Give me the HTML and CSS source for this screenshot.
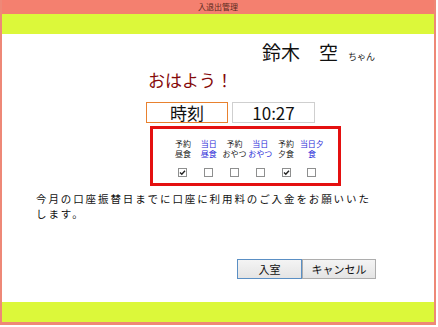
FILE: index.html
```html
<!DOCTYPE html>
<html lang="ja">
  <head>
    <meta charset="UTF-8" />
    <meta name="viewport" content="width=device-width, initial-scale=1.0" />
    <title>入退出管理</title>
    <link rel="stylesheet" href="styles.css">
  </head>
  <body>
    <div class="window">
      <div class="title-bar">入退出管理</div>
      <div class="band"></div>
      <div class="content">
        <div class="name-row">
          <span class="name">鈴木　空</span>
          <span class="suffix">ちゃん</span>
        </div>
        <div class="greeting">おはよう！</div>
        <div class="time-row">
          <div class="time-label">時刻</div>
          <div class="time-value">10:27</div>
        </div>
        <div class="meal-box">
          <div class="meal-grid">
            <div class="meal-label">予約<br>昼食</div>
            <div class="meal-label today">当日<br>昼食</div>
            <div class="meal-label">予約<br>おやつ</div>
            <div class="meal-label today">当日<br>おやつ</div>
            <div class="meal-label">予約<br>夕食</div>
            <div class="meal-label today">当日夕<br>食</div>

            <div class="cell"><span class="cb checked"><svg viewBox="0 0 9 9" width="9" height="9"><path d="M2 4.5 L3.8 6.3 L7 2.8" fill="none" stroke="#222" stroke-width="1.4"/></svg></span></div>
            <div class="cell"><span class="cb"></span></div>
            <div class="cell"><span class="cb"></span></div>
            <div class="cell"><span class="cb"></span></div>
            <div class="cell"><span class="cb checked"><svg viewBox="0 0 9 9" width="9" height="9"><path d="M2 4.5 L3.8 6.3 L7 2.8" fill="none" stroke="#222" stroke-width="1.4"/></svg></span></div>
            <div class="cell"><span class="cb"></span></div>
          </div>
        </div>
        <p class="message">今月の口座振替日までに口座に利用料のご入金をお願いいた<br>します。</p>
        <div class="buttons">
          <button class="btn btn-primary">入室</button>
          <button class="btn">キャンセル</button>
        </div>
      </div>
      <div class="band"></div>
    </div>
  </body>
</html>
```

FILE: styles.css
```css
* {
  padding: 0;
  margin: 0;
  box-sizing: border-box;
}
html,
body {
  width: 100%;
  height: 100%;
  background: #fff;
  font-family: "Noto Sans CJK JP", "Noto Sans", sans-serif;
}
.window {
  width: 436px;
  height: 325px;
  display: flex;
  flex-direction: column;
  border-left: 2px solid #ee8877;
  border-right: 2px solid #ee8877;
  border-bottom: 3px solid #ee8877;
}
.title-bar {
  height: 14px;
  background: #f4806f;
  color: #5b2a20;
  font-size: 8px;
  line-height: 14px;
  text-align: center;
}
.band {
  height: 20px;
  background: #dcf83a;
}
.content {
  flex: 1;
  background: #fff;
  display: flex;
  flex-direction: column;
}
.name-row {
  margin-top: 6px;
  padding-left: 260px;
  height: 24px;
  display: flex;
  align-items: baseline;
  line-height: 24px;
}
.name {
  font-size: 19px;
  color: #111;
}
.suffix {
  margin-left: 10px;
  font-size: 9px;
  color: #222;
}
.greeting {
  margin-top: 4px;
  padding-left: 146px;
  height: 24px;
  line-height: 24px;
  font-size: 17px;
  color: #850a0a;
}
.time-row {
  margin-top: 10px;
  padding-left: 144px;
  display: flex;
  gap: 4px;
}
.time-label,
.time-value {
  height: 21px;
  line-height: 19px;
  font-size: 17px;
  text-align: center;
  color: #111;
}
.time-label {
  width: 82px;
  border: 1px solid #e8812f;
}
.time-value {
  width: 83px;
  border: 1px solid #cfcfcf;
}
.meal-box {
  margin-top: 3px;
  margin-left: 148px;
  width: 191px;
  height: 60px;
  border: 3px solid #e41010;
  padding: 10px 0 0 17px;
}
.meal-grid {
  display: grid;
  grid-template-columns: repeat(6, 25.8px);
  grid-template-rows: 20px 16px;
  row-gap: 5px;
}
.meal-label {
  font-size: 8px;
  line-height: 10px;
  text-align: center;
  color: #222;
  white-space: nowrap;
}
.meal-label.today {
  color: #2b2bd8;
}
.cell {
  display: flex;
  justify-content: center;
  align-items: center;
}
.cb {
  width: 9px;
  height: 9px;
  border: 1px solid #8e8f8f;
  background: #fff;
  display: flex;
  align-items: center;
  justify-content: center;
}
.cb svg {
  flex: none;
}
.message {
  margin-top: 5px;
  padding-left: 34px;
  font-size: 10.5px;
  line-height: 15px;
  letter-spacing: 1.9px;
  color: #111;
}
.buttons {
  margin-top: 38px;
  padding-left: 235px;
  display: flex;
}
.btn {
  height: 20px;
  font-family: "Noto Sans CJK JP", sans-serif;
  font-size: 11px;
  line-height: 18px;
  color: #111;
  background: linear-gradient(#f4f4f4, #e4e4e4);
  border: 1px solid #adadad;
  width: 74px;
}
.btn-primary {
  width: 65px;
  border-color: #5a8fc4;
}
```
